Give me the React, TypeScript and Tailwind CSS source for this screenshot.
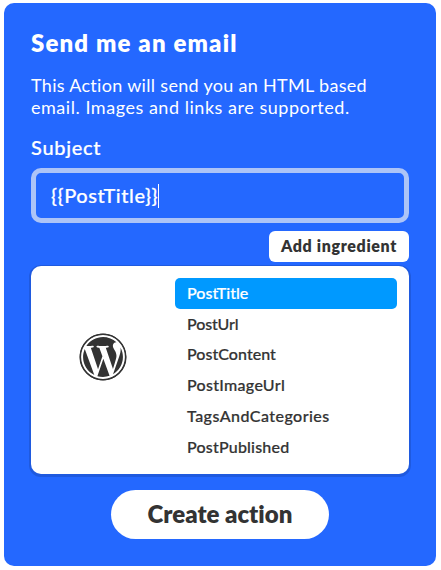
import { FaWordpress } from "react-icons/fa";

const ingredients = [
  { name: "PostTitle", spacing: "tracking-[0.02px]" },
  { name: "PostUrl", spacing: "tracking-[-0.1px]" },
  { name: "PostContent", spacing: "tracking-[0.05px]" },
  { name: "PostImageUrl", spacing: "tracking-[0.3px]" },
  { name: "TagsAndCategories", spacing: "tracking-[0.46px]" },
  { name: "PostPublished", spacing: "tracking-[0.2px]" },
];

function WordPressMark() {
  return (
    <svg width="48" height="48" viewBox="0 0 48 48" aria-label="WordPress">
      <FaWordpress size={48} color="#333" />
      <circle cx="24" cy="24" r="21.3" fill="none" stroke="#fff" strokeWidth="1.5" />
      <circle cx="24" cy="24" r="22.7" fill="none" stroke="#333" strokeWidth="1.6" />
    </svg>
  );
}

export default function App() {
  return (
    <div className="h-[570px] w-[441px] bg-white pt-[3px] pl-1 font-['Lato','Open_Sans',sans-serif] [font-variant-ligatures:none]">
      <main className="flex h-[563px] w-[432px] flex-col rounded-[10px] bg-[#2468ff] px-[27px] text-white">
        <h1 className="mt-[25px] h-[30px] whitespace-nowrap text-[24px] leading-[30px] font-extrabold tracking-[1.15px]">
          Send me an email
        </h1>
        <p className="mt-[16px] text-[18px] leading-[22px] whitespace-nowrap">
          <span className="tracking-[0.31px]">This Action will send you an HTML based</span>
          <br />
          <span className="tracking-[0.53px]">email. Images and links are supported.</span>
        </p>
        <label className="mt-[17px] h-[24px] text-[20px] leading-[24px] font-medium tracking-[0.7px] [-webkit-text-stroke:0.22px_currentColor]">
          Subject
        </label>
        <div className="mt-[9px] flex h-[55px] shrink-0 items-center rounded-[10px] border-[5px] border-[#adc4f7] pl-[15px] text-[20px] font-medium">
          <span className="pb-[2px] tracking-[0.55px] [-webkit-text-stroke:0.22px_currentColor]">{"{{PostTitle}}"}</span>
          <span className="h-6 w-px bg-white" />
        </div>
        <button className="mt-[8px] flex h-[31px] w-[140px] shrink-0 items-center justify-center self-end rounded-[6px] bg-white pb-px text-[16px] font-extrabold tracking-[0.65px] whitespace-nowrap text-[#333]">
          Add ingredient
        </button>
        <section className="mt-[4px] flex h-[208px] shrink-0 rounded-[10px] bg-white shadow-[0_1px_0_2px_#1f5adf]">
          <div className="flex w-[144px] justify-center pt-[67px]">
            <WordPressMark />
          </div>
          <ul className="mt-[12px] w-[222px]">
            {ingredients.map((item, i) => (
              <li
                key={item.name}
                className={`flex h-[30.8px] items-center rounded-[5px] pb-px pl-3 text-[16px] font-medium [-webkit-text-stroke:0.22px_currentColor] ${item.spacing} ${
                  i === 0 ? "bg-[#0099ff] text-white" : "text-[#333]"
                }`}
              >
                {item.name}
              </li>
            ))}
          </ul>
        </section>
        <button className="mt-[16px] flex h-[49px] w-[218px] shrink-0 items-center justify-center self-center rounded-full bg-white pb-[2px] text-[24px] font-extrabold whitespace-nowrap text-[#333]">
          Create action
        </button>
      </main>
    </div>
  );
}
